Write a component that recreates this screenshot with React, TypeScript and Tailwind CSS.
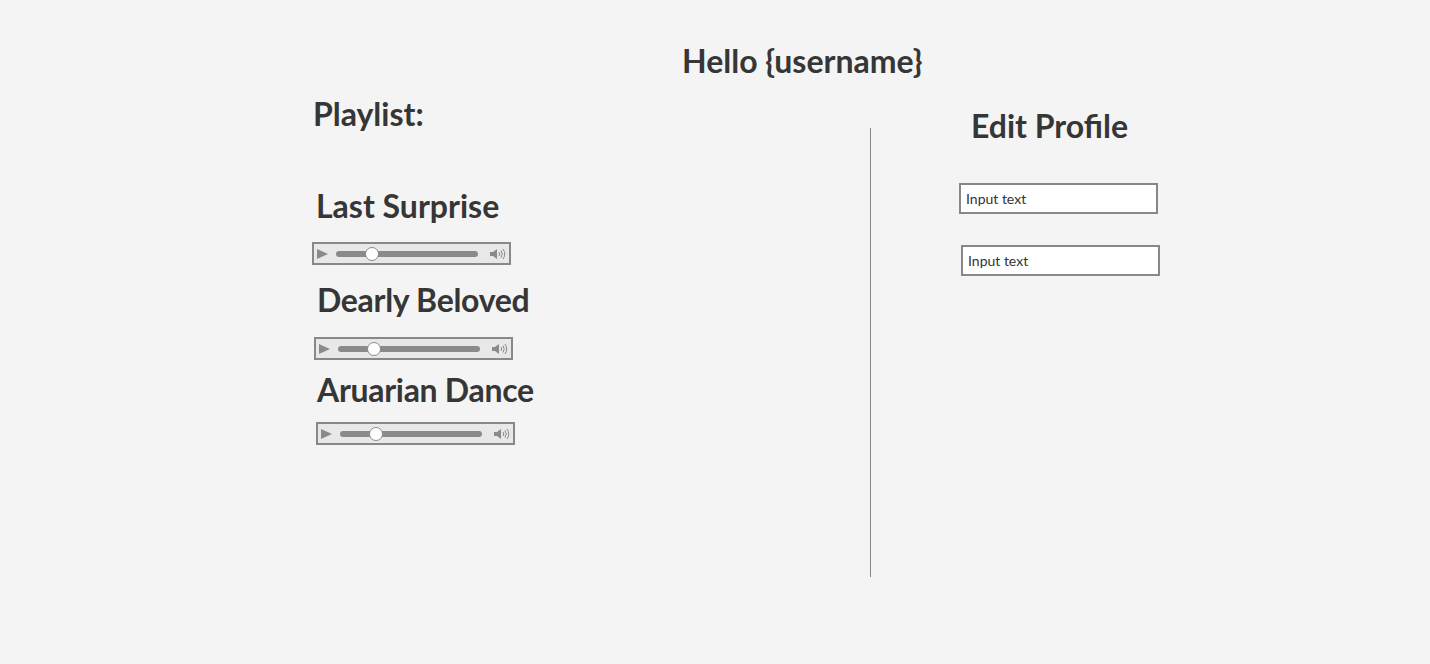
const tracks = [
  { title: "Last Surprise", titleCls: "mt-[54px] ml-[3px]", playerCls: "mt-[17px] ml-[-1px]" },
  { title: "Dearly Beloved", titleCls: "mt-[16px] ml-[4px] tracking-[-0.3px]", playerCls: "mt-[18px] ml-[1px]" },
  { title: "Aruarian Dance", titleCls: "mt-[11px] ml-[4px] tracking-[-0.3px]", playerCls: "mt-[13px] ml-[3px]" },
];

const AudioPlayer = ({ className }: { className: string }) => (
  <div
    className={`flex items-center w-[199px] h-[23px] border-2 border-[#888] bg-[#e8e8e8] pl-[3px] ${className}`}
  >
    <svg width="11" height="10" viewBox="0 0 11 10">
      <polygon points="0,0 11,5 0,10" fill="#8a8a8a" />
    </svg>
    <div className="relative ml-[8px] w-[142px] h-[6px] rounded-full bg-[#8a8a8a]">
      <div className="absolute left-[29px] top-[-4px] w-[14px] h-[14px] rounded-full bg-white border-[1.5px] border-[#8a8a8a]" />
    </div>
    <svg className="ml-[12px]" width="16" height="12" viewBox="0 0 16 12">
      <rect x="0" y="4" width="3" height="4" fill="#8a8a8a" />
      <polygon points="3,4 7,1 7,11 3,8" fill="#8a8a8a" />
      <path d="M9 4 Q10.5 6 9 8" stroke="#8a8a8a" strokeWidth="1" fill="none" />
      <path d="M11 2.5 Q13.5 6 11 9.5" stroke="#8a8a8a" strokeWidth="1" fill="none" />
      <path d="M13 1 Q16.5 6 13 11" stroke="#8a8a8a" strokeWidth="1" fill="none" />
    </svg>
  </div>
);

const TextInput = ({ className }: { className: string }) => (
  <div
    className={`flex items-center w-[199px] h-[31px] border-2 border-[#888] bg-white px-[5px] text-[14px] text-[#333] ${className}`}
  >
    Input text
  </div>
);

export default function App() {
  return (
    <div className="min-h-screen bg-[#f4f4f4] pt-[42px] font-['Lato',sans-serif] text-[#363636]">
      <h1 className="ml-[682px] text-[32px] leading-[38px] font-bold">Hello {"{username}"}</h1>

      <div className="flex mt-[15px]">
        {/* playlist */}
        <div className="w-[870px] pl-[313px]">
          <h2 className="text-[32px] leading-[38px] font-bold">Playlist:</h2>
          {tracks.map((t) => (
            <div key={t.title}>
              <h3 className={`text-[32px] leading-[38px] font-bold ${t.titleCls}`}>{t.title}</h3>
              <AudioPlayer className={t.playerCls} />
            </div>
          ))}
        </div>

        <div className="w-px h-[449px] mt-[33px] bg-[#888]" />

        {/* profile */}
        <div className="pl-[88px]">
          <h2 className="ml-[12px] mt-[12px] text-[32px] leading-[38px] font-bold">Edit Profile</h2>
          <TextInput className="mt-[38px]" />
          <TextInput className="mt-[31px] ml-[2px]" />
        </div>
      </div>
    </div>
  );
}
